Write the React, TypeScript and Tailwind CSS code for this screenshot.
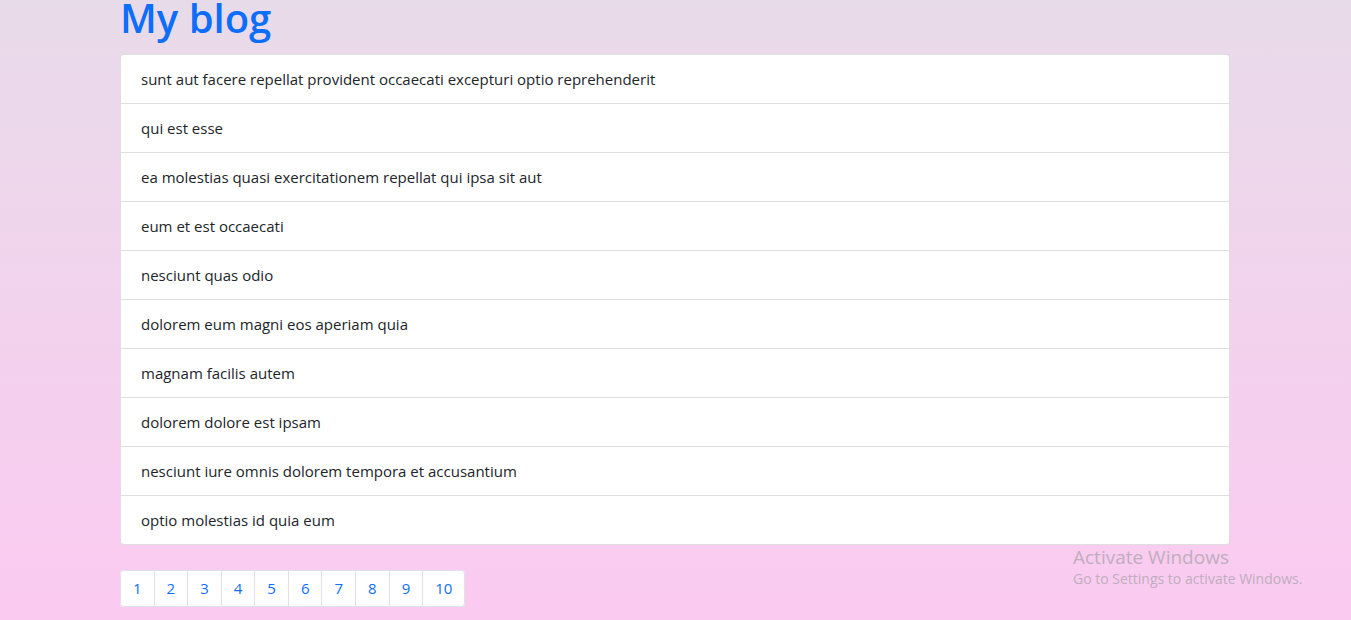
import React from "react";

const posts = [
  "sunt aut facere repellat provident occaecati excepturi optio reprehenderit",
  "qui est esse",
  "ea molestias quasi exercitationem repellat qui ipsa sit aut",
  "eum et est occaecati",
  "nesciunt quas odio",
  "dolorem eum magni eos aperiam quia",
  "magnam facilis autem",
  "dolorem dolore est ipsam",
  "nesciunt iure omnis dolorem tempora et accusantium",
  "optio molestias id quia eum",
];

const pages = [1, 2, 3, 4, 5, 6, 7, 8, 9, 10];

export default function App() {
  return (
    <div
      className="relative h-[620px] w-full overflow-hidden bg-gradient-to-b from-[#e8dbe9] to-[#fbcaf1] text-[#212529]"
      style={{ fontFamily: '"Open Sans", "Noto Sans", sans-serif' }}
    >
      <div className="ml-[120px] w-[1110px]">
        <h1 className="-mt-[6px] mb-[8px] h-[52px] text-[40px] font-semibold leading-[48px] text-[#0d6efd]">
          My blog
        </h1>
        <ul className="overflow-hidden rounded-[4px] border border-black/[0.125] bg-white">
          {posts.map((p, i) => (
            <li
              key={i}
              className={`px-[20px] py-[12px] text-[15px] leading-[24px] ${
                i > 0 ? "border-t border-black/[0.125]" : ""
              }`}
            >
              {p}
            </li>
          ))}
        </ul>
        <nav className="mt-[25px] flex">
          <ul className="flex rounded-[4px] bg-white">
            {pages.map((n, i) => (
              <li
                key={n}
                className={`flex h-[37px] items-center justify-center border-y border-r border-[#dee2e6] px-[12px] text-[15px] text-[#0d6efd] ${
                  i === 0 ? "rounded-l-[4px] border-l" : ""
                } ${i === pages.length - 1 ? "rounded-r-[4px]" : ""}`}
              >
                {n}
              </li>
            ))}
          </ul>
        </nav>
      </div>
      <div className="pointer-events-none absolute left-[1073px] top-[545px] text-[#bfaebd]">
        <div className="text-[19px] leading-[24px]">Activate Windows</div>
        <div className="text-[14px] leading-[20px]">Go to Settings to activate Windows.</div>
      </div>
    </div>
  );
}
